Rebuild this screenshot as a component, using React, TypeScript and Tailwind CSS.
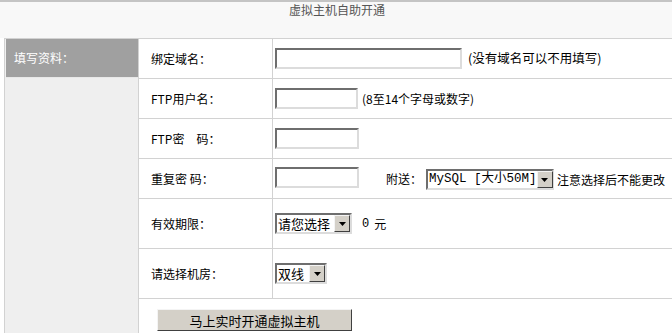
import React from "react";

const inputCls =
  "h-[21px] bg-white border-2 border-t-[#6e6e6e] border-l-[#6e6e6e] border-b-[#dcdcdc] border-r-[#dcdcdc]";

function Select({ text, w, mono }: { text: string; w: number; mono?: boolean }) {
  return (
    <div
      className="h-[21px] bg-white border-2 border-t-[#6e6e6e] border-l-[#6e6e6e] border-b-[#dcdcdc] border-r-[#dcdcdc] flex items-center justify-between"
      style={{ width: w }}
    >
      <span
        className={
          "pl-[1px] leading-none text-black whitespace-nowrap " +
          (mono
            ? "font-['Liberation_Mono','Noto_Sans_CJK_SC',monospace] text-[12.5px]"
            : "text-[13px]")
        }
      >
        {text}
      </span>
      <div className="shrink-0 w-[16px] h-[17px] bg-[#d4d0c8] border border-t-[#f4f4f4] border-l-[#f4f4f4] border-b-[#404040] border-r-[#404040] flex items-center justify-center">
        <svg width="7" height="4" viewBox="0 0 7 4">
          <path d="M0 0H7L3.5 4Z" fill="#000" />
        </svg>
      </div>
    </div>
  );
}

function Row({
  label,
  h,
  children,
}: {
  label: string;
  h: number;
  children: React.ReactNode;
}) {
  return (
    <div className="flex border-b border-[#d2d2d2]" style={{ height: h }}>
      <div className="w-[134px] border-r border-[#d2d2d2] flex items-center pl-[12px] text-black whitespace-pre">
        {label}
      </div>
      <div className="flex-1 flex items-center pl-[2px] gap-[4px] text-black whitespace-nowrap">
        {children}
      </div>
    </div>
  );
}

export default function App() {
  return (
    <div className="w-[672px] h-[333px] overflow-hidden bg-white text-[12px] font-['Noto_Sans_CJK_SC','Noto_Sans',sans-serif]">
      <div className="h-[38px] border-t-2 border-[#c4c4c4] bg-[#f8f8f8] text-center text-[#555] pl-[2px] leading-[16px]">
        虚拟主机自助开通
      </div>
      <div className="ml-[4px] border-l border-t border-[#d2d2d2] flex h-[300px]">
        <div className="w-[134px] bg-[#efefef] border-r border-[#d2d2d2] pl-[1px]">
          <div className="h-[39px] bg-[#a0a0a0] text-white flex items-center pl-[8px] border-b border-[#e8e8e8]">
            填写资料：
          </div>
        </div>
        <div className="flex-1">
          <Row label="绑定域名：" h={40}>
            <div className={inputCls + " w-[187px]"} />
            <span className="ml-[2px] text-[12.5px]">(没有域名可以不用填写)</span>
          </Row>
          <Row label="FTP用户名：" h={40}>
            <div className={inputCls + " w-[83px]"} />
            <span>(8至14个字母或数字)</span>
          </Row>
          <Row label={"FTP密　码："} h={40}>
            <div className={inputCls + " w-[84px]"} />
          </Row>
          <Row label="重复密 码：" h={40}>
            <div className={inputCls + " w-[84px] -mt-[2px]"} />
            <span className="ml-[23px]">附送：</span>
            <div className="mt-[2px] flex items-center gap-[3px]">
              <Select text="MySQL [大小50M]" w={128} mono />
              <span>注意选择后不能更改</span>
            </div>
          </Row>
          <Row label="有效期限：" h={50}>
            <Select text="请您选择" w={77} />
            <span className="ml-[6px] font-['Liberation_Mono',monospace]">0</span>
            <span className="ml-[1px]">元</span>
          </Row>
          <Row label="请选择机房：" h={50}>
            <Select text="双线" w={52} />
          </Row>
          <div className="pl-[18px] pt-[10px]">
            <button className="w-[195px] h-[22px] bg-[#d4d0c8] border border-t-[#f4f4f4] border-l-[#f4f4f4] border-b-[#404040] border-r-[#404040] text-[13px] text-black leading-none">
              马上实时开通虚拟主机
            </button>
          </div>
        </div>
      </div>
    </div>
  );
}
